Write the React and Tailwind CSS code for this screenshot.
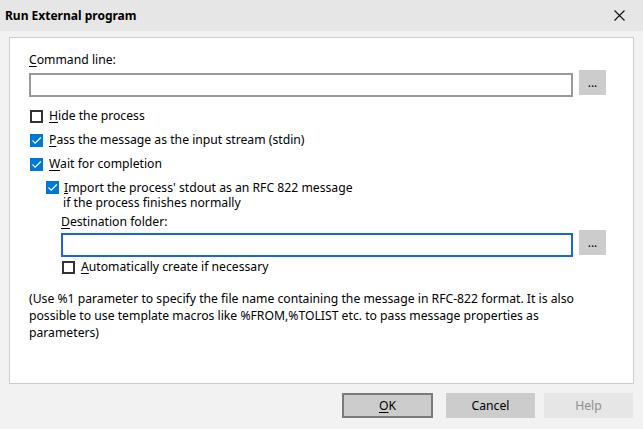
import React from "react";

function Check({ checked }) {
  if (checked) {
    return (
      <span className="w-[13px] h-[13px] bg-[#0078d7] flex items-center justify-center shrink-0">
        <svg width="11" height="11" viewBox="0 0 11 11">
          <path d="M1.5 5.5 L4.2 8.2 L9.8 2.5" fill="none" stroke="#ffffff" strokeWidth="1.3" />
        </svg>
      </span>
    );
  }
  return <span className="w-[13px] h-[13px] border-2 border-[#333333] bg-white shrink-0" />;
}

function Dots() {
  return (
    <button className="w-[27px] h-[25px] bg-[#cccccc] text-[12px] leading-[25px] text-center shrink-0">
      ...
    </button>
  );
}

export default function App() {
  return (
    <div className="w-[643px] h-[429px] bg-[#f2f2f2] flex flex-col font-['Noto_Sans',sans-serif] text-[12.2px] text-black">
      {/* title bar */}
      <div className="h-[31px] bg-[#e6e6e6] flex items-center justify-between pl-[5px] pr-[18px] shrink-0">
        <span className="font-bold leading-[16px] text-[12px]">Run External program</span>
        <svg width="11" height="11" viewBox="0 0 11 11">
          <path d="M0.5 0.5 L10.5 10.5 M10.5 0.5 L0.5 10.5" stroke="#111111" strokeWidth="1.1" />
        </svg>
      </div>

      {/* panel */}
      <div className="mx-[9px] mt-[6px] h-[347px] bg-white border border-[#cccccc] pl-[19px] pr-[27px] pt-[14px] flex flex-col">
        <div className="leading-[16px] h-[16px]">
          <span className="underline underline-offset-2">C</span>ommand line:
        </div>
        <div className="mt-[2px] flex items-start gap-[6px] h-[27px]">
          <div className="mt-[3px] w-[544px] h-[24px] border-2 border-[#999999] bg-white" />
          <Dots />
        </div>

        <div className="mt-[7px] flex flex-col">
          <div className="h-[24px] flex items-center gap-[6px] pl-[1px]">
            <Check checked={false} />
            <span className="leading-[16px]">
              <span className="underline underline-offset-2">H</span>ide the process
            </span>
          </div>
          <div className="h-[24px] flex items-center gap-[6px] pl-[1px]">
            <Check checked />
            <span className="leading-[16px]">
              <span className="underline underline-offset-2">P</span>ass the message as the input stream (stdin)
            </span>
          </div>
          <div className="h-[24px] flex items-center gap-[6px] pl-[1px]">
            <Check checked />
            <span className="leading-[16px]">
              <span className="underline underline-offset-2">W</span>ait for completion
            </span>
          </div>
        </div>

        <div className="mt-[4px] pl-[17px] flex items-start gap-[5px]">
          <div className="mt-[1px]">
            <Check checked />
          </div>
          <div className="leading-[15px]">
            <div>
              <span className="underline underline-offset-1">I</span>mport the process' stdout as an RFC 822 message
            </div>
            <div className="-ml-[1px]">if the process finishes normally</div>
          </div>
        </div>

        <div className="pl-[32px] flex flex-col">
          <div className="mt-[4px] leading-[16px] h-[16px]">
            <span className="underline underline-offset-2">D</span>estination folder:
          </div>
          <div className="flex items-start gap-[6px] h-[27px]">
            <div className="mt-[3px] w-[512px] h-[24px] border-2 border-[#1a66d6] bg-white" />
            <Dots />
          </div>
          <div className="mt-[2px] h-[16px] flex items-center gap-[6px] pl-[1px]">
            <Check checked={false} />
            <span className="leading-[16px]">
              <span className="underline underline-offset-2">A</span>utomatically create if necessary
            </span>
          </div>
        </div>

        <div className="mt-[15px] leading-[17px] whitespace-nowrap">
          <div>(Use %1 parameter to specify the file name containing the message in RFC-822 format. It is also</div>
          <div>possible to use template macros like %FROM,%TOLIST etc. to pass message properties as</div>
          <div>parameters)</div>
        </div>
      </div>

      {/* buttons */}
      <div className="mt-[9px] flex justify-end pr-[10px]">
        <button className="w-[91px] h-[25px] bg-[#cccccc] border-2 border-[#7a7a7a] leading-[21px] text-center">
          <span className="underline underline-offset-2">O</span>K
        </button>
        <button className="ml-[13px] w-[89px] h-[25px] bg-[#cccccc] leading-[25px] text-center">Cancel</button>
        <button className="ml-[9px] w-[89px] h-[25px] bg-[#e6e6e6] text-[#8f8f8f] leading-[25px] text-center">Help</button>
      </div>
    </div>
  );
}
